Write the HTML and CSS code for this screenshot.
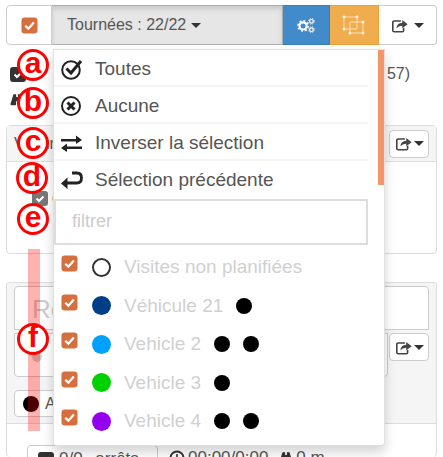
FILE: index.html
```html
<!DOCTYPE html>
<html lang="fr">
<head>
  <meta charset="UTF-8">
  <meta name="viewport" content="width=device-width, initial-scale=1">
  <title>Tournées</title>
  <link rel="stylesheet" href="styles.css">
</head>
<body>
  <svg class="icon-defs" aria-hidden="true">
    <symbol id="tick-box" viewBox="0 0 18 18">
      <rect x="0.5" y="0.5" width="17" height="17" rx="3.5" fill="#d66f3e"/>
      <path d="M4.5 9.2 L7.8 12.4 L13.6 5.8" fill="none" stroke="#fff" stroke-width="2.4"/>
    </symbol>
    <symbol id="tick-dark" viewBox="0 0 16 15">
      <rect x="0" y="0" width="16" height="15" rx="3" fill="#333"/>
      <path d="M4.5 7.5 L7 10 L11.5 5.5" fill="none" stroke="#fff" stroke-width="2"/>
    </symbol>
    <symbol id="tick-grey" viewBox="0 0 16 15">
      <rect x="0" y="0" width="16" height="15" rx="3" fill="#777"/>
      <path d="M4.5 7.5 L7 10 L11.5 5.5" fill="none" stroke="#fff" stroke-width="2"/>
    </symbol>
    <symbol id="share" viewBox="0 0 20 18">
      <path d="M11 4 H3.5 Q2 4 2 5.5 V14.5 Q2 16 3.5 16 H12.5 Q14 16 14 14.5 V11.5" fill="none" stroke="currentColor" stroke-width="1.8"/>
      <path d="M6 12 Q6.5 6.5 12.5 6 V3 L18.5 7.7 L12.5 12 V9.2 Q8.5 9 6 12 Z" fill="currentColor"/>
    </symbol>
    <symbol id="binoculars" viewBox="0 0 16 14">
      <path d="M4 1 H7 V4 H9 V1 H12 L15.5 12 Q15.5 13.5 14 13.5 H10 Q9 13.5 9 12 V9 H7 V12 Q7 13.5 6 13.5 H2 Q0.5 13.5 0.5 12 Z" fill="currentColor"/>
    </symbol>
  </svg>

  <div class="toolbar">
    <button class="tool tool-check"><svg class="tick"><use href="#tick-box"/></svg></button>
    <button class="tool tool-routes">Tournées : 22/22 <span class="caret"></span></button>
    <button class="tool tool-blue">
      <svg class="tool-icon" viewBox="0 0 24 20">
        <circle cx="8.5" cy="10.5" r="4.3" fill="none" stroke="#fff" stroke-width="2.6"/>
        <circle cx="8.5" cy="10.5" r="6.2" fill="none" stroke="#fff" stroke-width="1.8" stroke-dasharray="2.4 2.4"/>
        <circle cx="18.5" cy="5" r="2.2" fill="none" stroke="#fff" stroke-width="1.4"/>
        <circle cx="18.5" cy="5" r="3.5" fill="none" stroke="#fff" stroke-width="1" stroke-dasharray="1.4 1.4"/>
        <circle cx="18.5" cy="15" r="2.2" fill="none" stroke="#fff" stroke-width="1.4"/>
        <circle cx="18.5" cy="15" r="3.5" fill="none" stroke="#fff" stroke-width="1" stroke-dasharray="1.4 1.4"/>
      </svg>
    </button>
    <button class="tool tool-orange">
      <svg class="tool-icon vector" viewBox="0 0 24 20">
        <g fill="none" stroke="#fbe3c0" stroke-width="0.9">
          <path d="M2 2 H15 V14 H2 Z"/>
          <path d="M8 7 H21 V18 H8 Z"/>
        </g>
        <g fill="#fdf0dc">
          <circle cx="2" cy="2" r="1.5"/><circle cx="15" cy="2" r="1.5"/>
          <circle cx="2" cy="14" r="1.5"/><circle cx="21" cy="7" r="1.5"/>
          <circle cx="8" cy="18" r="1.5"/><circle cx="21" cy="18" r="1.5"/>
        </g>
      </svg>
    </button>
    <button class="tool tool-share"><svg class="share"><use href="#share"/></svg><span class="caret"></span></button>
  </div>

  <div class="summary">
    <div class="summary-row">
      <svg class="check-dark"><use href="#tick-dark"/></svg>
      <span>57)</span>
    </div>
    <div class="summary-row">
      <svg class="bino"><use href="#binoculars"/></svg>
    </div>
  </div>

  <div class="panel panel-top">
    <div class="panel-head">
      <span>Voiture</span>
      <button class="btn-share"><svg class="share"><use href="#share"/></svg><span class="caret"></span></button>
    </div>
    <div class="panel-body">
      <svg class="check-dark"><use href="#tick-grey"/></svg>
      <span>conducteur</span>
    </div>
  </div>

  <div class="panel panel-bottom">
    <div class="panel-grey">
      <div class="search-box">Recherche</div>
      <div class="search-row">
        <div class="note-box"><span class="note-icon"></span></div>
        <button class="btn-share"><svg class="share"><use href="#share"/></svg><span class="caret"></span></button>
      </div>
      <div class="chip-row">
        <span class="chip"><span class="dot dot-black"></span>Arrêts</span>
      </div>
    </div>
    <div class="panel-stats">
      <span class="stat-btn"><svg class="check-dark"><use href="#tick-dark"/></svg><span class="stat-label">0/0 arrêts</span></span>
      <span class="stat">
        <svg class="clock" viewBox="0 0 16 16"><circle cx="8" cy="8" r="6.5" fill="none" stroke="currentColor" stroke-width="2"/><path d="M8 4 V8.5 H11" fill="none" stroke="currentColor" stroke-width="1.6"/></svg>
        00:00/0:00
      </span>
      <span class="stat"><svg class="bino"><use href="#binoculars"/></svg>0 m</span>
    </div>
  </div>

  <div class="stripe"></div>

  <div class="dropdown">
    <div class="menu-item">
      <svg class="menu-icon" viewBox="0 0 24 24">
        <circle cx="11" cy="13" r="8.8" fill="none" stroke="#222" stroke-width="2"/>
        <path d="M6.5 11.5 L11 16 L21 4" fill="none" stroke="#222" stroke-width="3"/>
      </svg>
      Toutes
    </div>
    <div class="menu-item">
      <svg class="menu-icon" viewBox="0 0 24 24">
        <circle cx="11" cy="12" r="9" fill="none" stroke="#222" stroke-width="2"/>
        <path d="M7.5 8.5 L14.5 15.5 M14.5 8.5 L7.5 15.5" fill="none" stroke="#222" stroke-width="3"/>
      </svg>
      Aucune
    </div>
    <div class="menu-item">
      <svg class="menu-icon" viewBox="0 0 24 24">
        <path d="M1 8 H16 V4.5 L22 9 L16 13 V10.5 H1 Z" fill="#222"/>
        <path d="M22 15.5 H7 V12.5 L1 17 L7 21 V18 H22 Z" fill="#222"/>
      </svg>
      Inverser la sélection
    </div>
    <div class="menu-item">
      <svg class="menu-icon" viewBox="0 0 24 24">
        <path d="M12 5 H17 Q21.5 5 21.5 10 Q21.5 15 17 15 H6" fill="none" stroke="#222" stroke-width="2.8"/>
        <path d="M7.5 9.5 L1 15.5 L7.5 21 Z" fill="#222"/>
      </svg>
      Sélection précédente
    </div>
    <div class="filter">filtrer</div>
    <div class="vehicles">
      <div class="vehicle">
        <svg class="tick"><use href="#tick-box"/></svg>
        <span class="swatch swatch-empty"></span>
        <span class="vehicle-name">Visites non planifiées</span>
      </div>
      <div class="vehicle">
        <svg class="tick"><use href="#tick-box"/></svg>
        <span class="swatch swatch-navy"></span>
        <span class="vehicle-name">Véhicule 21</span>
        <span class="stops"><span class="dot"></span></span>
      </div>
      <div class="vehicle">
        <svg class="tick"><use href="#tick-box"/></svg>
        <span class="swatch swatch-sky"></span>
        <span class="vehicle-name">Vehicle 2</span>
        <span class="stops"><span class="dot"></span><span class="dot"></span></span>
      </div>
      <div class="vehicle">
        <svg class="tick"><use href="#tick-box"/></svg>
        <span class="swatch swatch-green"></span>
        <span class="vehicle-name">Vehicle 3</span>
        <span class="stops"><span class="dot"></span></span>
      </div>
      <div class="vehicle">
        <svg class="tick"><use href="#tick-box"/></svg>
        <span class="swatch swatch-purple"></span>
        <span class="vehicle-name">Vehicle 4</span>
        <span class="stops"><span class="dot"></span><span class="dot"></span></span>
      </div>
    </div>
    <div class="scroll-thumb"></div>
  </div>

  <span class="mark mark-a">a</span>
  <span class="mark mark-b">b</span>
  <span class="mark mark-c">c</span>
  <span class="mark mark-d">d</span>
  <span class="mark mark-e">e</span>
  <span class="mark mark-f">f</span>
</body>
</html>
```

FILE: styles.css
```css
html {
  height: 100%;
  overflow: hidden;
}
body {
  font-family: "Liberation Sans", Arial, sans-serif;
  font-size: 16px;
  color: #555;
  background: #fff;
  margin: 0;
  padding: 5px 6px 0;
  height: 457px;
  box-sizing: border-box;
  overflow: hidden;
  position: relative;
}
button {
  font-family: inherit;
  font-size: 16px;
  color: #555;
  margin: 0;
  padding: 0;
  cursor: pointer;
}
.icon-defs {
  position: absolute;
  width: 0;
  height: 0;
}
.caret {
  display: inline-block;
  border-top: 5px solid #333;
  border-left: 5px solid transparent;
  border-right: 5px solid transparent;
  vertical-align: middle;
}
.toolbar {
  display: flex;
  height: 40px;
}
.tool {
  border: 1px solid #ccc;
  border-left: none;
  background: #fff;
  display: flex;
  align-items: center;
  justify-content: center;
  gap: 5px;
  box-sizing: border-box;
}
.tool-check {
  width: 46px;
  border-left: 1px solid #ccc;
  border-radius: 4px 0 0 4px;
}
.tool-routes {
  width: 231px;
  justify-content: flex-start;
  padding-left: 15px;
  background: #e6e6e6;
  border-color: #adadad;
  box-shadow: inset 0 3px 5px rgba(0, 0, 0, 0.125);
}
.tool-blue {
  width: 47px;
  background: #428bca;
  border-color: #357ebd;
}
.tool-orange {
  width: 49px;
  background: #f0ad4e;
  border-color: #eea236;
}
.tool-share {
  flex: 1;
  border-radius: 0 4px 4px 0;
}
.tool-icon {
  width: 20px;
  height: 17px;
}
.tool-icon.vector {
  width: 24px;
  height: 20px;
}
.tick {
  width: 17px;
  height: 17px;
  display: block;
}
.share {
  width: 18px;
  height: 17px;
  color: #444;
}
.summary {
  height: 80px;
  padding: 20px 0 0 4px;
  box-sizing: border-box;
  margin-right: 27px;
}
.summary-row {
  display: flex;
  justify-content: space-between;
  align-items: center;
  height: 18px;
  margin-bottom: 7px;
}
.check-dark {
  display: block;
  width: 16px;
  height: 15px;
  flex: none;
}
.bino {
  width: 14px;
  height: 13px;
  color: #333;
}
.panel {
  border: 1px solid #ddd;
  border-radius: 4px;
  width: 431px;
  box-sizing: border-box;
}
.panel-top {
  height: 129px;
}
.panel-head {
  height: 35px;
  background: #f5f5f5;
  border-bottom: 1px solid #ddd;
  display: flex;
  justify-content: space-between;
  align-items: center;
  padding: 0 7px;
}
.btn-share {
  width: 40px;
  height: 28px;
  background: #fff;
  border: 1px solid #ccc;
  border-radius: 4px;
  display: flex;
  align-items: center;
  justify-content: center;
  gap: 1px;
}
.panel-body {
  display: flex;
  align-items: center;
  gap: 4px;
  padding: 27px 25px;
}
.panel-bottom {
  margin-top: 28px;
  height: 175px;
  border-bottom: none;
  overflow: hidden;
}
.panel-grey {
  height: 141px;
  background: #f5f5f5;
  border-bottom: 1px solid #ddd;
  padding: 3px 7px;
  box-sizing: border-box;
}
.search-box {
  height: 44px;
  background: #fff;
  border: 1px solid #ccc;
  border-radius: 4px 4px 0 0;
  box-sizing: border-box;
  font-size: 26px;
  color: #ccc;
  padding: 7px 17px;
}
.search-row {
  display: flex;
  margin-top: 3px;
}
.note-box {
  flex: 1;
  height: 44px;
  background: #fff;
  border: 1px solid #ccc;
  border-radius: 0 0 4px 4px;
  box-sizing: border-box;
  margin-right: 1px;
  padding: 18px 17px;
}
.note-icon {
  display: block;
  width: 10px;
  height: 10px;
  background: #ccc;
  border-radius: 50%;
}
.chip-row {
  margin-top: 13px;
}
.chip {
  display: inline-flex;
  align-items: center;
  gap: 6px;
  height: 27px;
  background: #fff;
  border: 1px solid #ccc;
  border-radius: 4px;
  padding: 0 8px;
  box-sizing: border-box;
}
.panel-stats {
  display: flex;
  align-items: flex-start;
  gap: 11px;
  padding: 21px 0 0 20px;
  font-size: 17px;
}
.stat-btn {
  display: flex;
  align-items: flex-start;
  gap: 5px;
  width: 131px;
  height: 30px;
  padding: 3px 10px;
  box-sizing: border-box;
  border: 1px solid #ccc;
  border-radius: 4px;
}
.stat-btn .check-dark {
  margin-top: 3px;
}
.stat-label {
  word-spacing: 8px;
}
.stat {
  display: flex;
  align-items: flex-start;
  gap: 3px;
  padding-top: 3px;
}
.stat .bino {
  margin-top: 3px;
}
.clock {
  width: 16px;
  height: 16px;
  margin-top: 2px;
  color: #333;
}
.stripe {
  position: absolute;
  left: 28px;
  top: 249px;
  width: 12px;
  height: 182px;
  background: rgba(255, 0, 0, 0.3);
}
.dropdown {
  position: absolute;
  left: 53px;
  top: 49px;
  width: 332px;
  height: 397px;
  background: #fff;
  border: 1px solid rgba(0, 0, 0, 0.12);
  border-radius: 0 0 4px 4px;
  box-shadow: 0 6px 12px rgba(0, 0, 0, 0.175);
  box-sizing: border-box;
  overflow: hidden;
  font-size: 19px;
}
.menu-item {
  width: 314px;
  height: 37px;
  display: flex;
  align-items: center;
  box-sizing: border-box;
  border-bottom: 2px solid #f5f5f5;
  color: #555;
  padding: 2px 0 0 6px;
  gap: 11px;
}
.menu-item:nth-child(4) {
  border-bottom: none;
  height: 38px;
  padding-top: 0;
}
.menu-icon {
  width: 24px;
  height: 24px;
  flex: none;
}
.filter {
  width: 314px;
  height: 46px;
  border: 2px solid #ddd;
  box-sizing: border-box;
  color: #ccc;
  padding: 10px 16px;
  font-size: 18px;
}
.vehicles {
  padding-top: 3px;
}
.vehicle {
  height: 38.5px;
  display: flex;
  align-items: center;
  padding-left: 7px;
  color: #d0d0d0;
  position: relative;
}
.vehicle .tick {
  margin-top: -7px;
}
.swatch {
  width: 19px;
  height: 19px;
  border-radius: 50%;
  margin-left: 14px;
  margin-right: 13px;
  box-sizing: border-box;
}
.swatch-empty { border: 2px solid #333; }
.swatch-navy { background: #003f87; }
.swatch-sky { background: #00a0ff; }
.swatch-green { background: #00d200; }
.swatch-purple { background: #9400f0; }
.stops {
  display: flex;
  gap: 13px;
  margin-left: 13px;
}
.dot {
  display: block;
  width: 16px;
  height: 16px;
  background: #000;
  border-radius: 50%;
}
.scroll-thumb {
  position: absolute;
  right: 0;
  top: 0;
  width: 6px;
  height: 135px;
  background: #f5956a;
}
.mark {
  position: absolute;
  width: 32px;
  height: 32px;
  box-sizing: border-box;
  border: 3px solid #f00;
  border-radius: 50%;
  background: #fff;
  color: #f00;
  font-size: 30px;
  font-weight: bold;
  line-height: 22px;
  text-align: center;
}
.mark-a { left: 17px; top: 49px; }
.mark-b { left: 17px; top: 87px; }
.mark-c { left: 17px; top: 127px; }
.mark-d { left: 16px; top: 162px; }
.mark-e { left: 17px; top: 203px; }
.mark-f { left: 17px; top: 323px; }
```
